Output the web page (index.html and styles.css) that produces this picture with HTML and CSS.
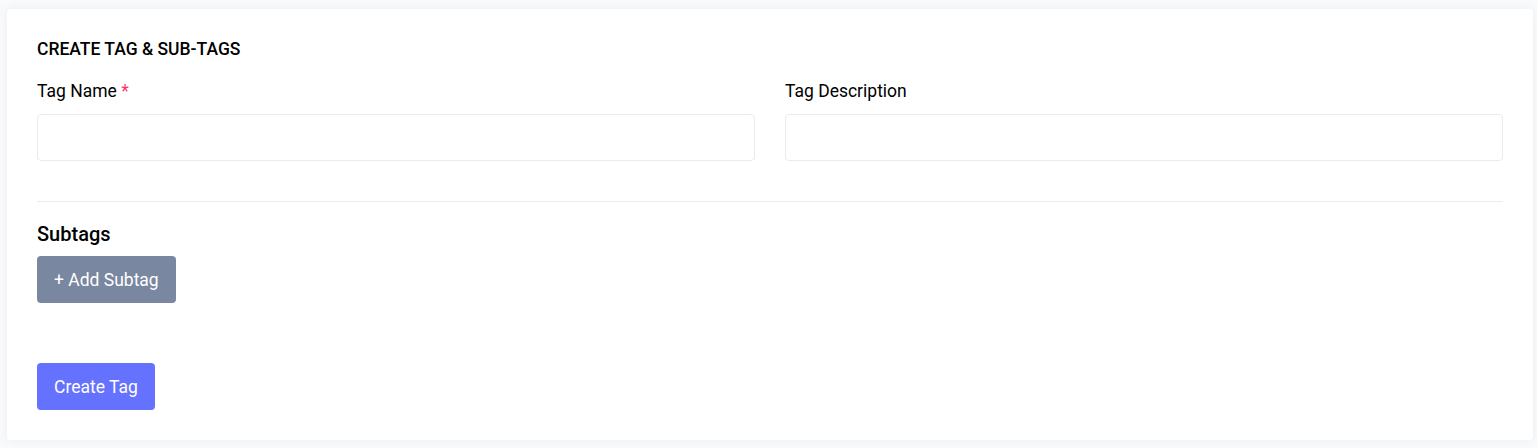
FILE: index.html
```html
<!DOCTYPE html>
<html>
<head>
<meta charset="utf-8">
<link rel="stylesheet" href="styles.css">
</head>
<body>
<div class="page">
  <div class="card">
    <h6 class="card-title">CREATE TAG &amp; SUB-TAGS</h6>
    <div class="row">
      <div class="field">
        <label class="label">Tag Name <span class="req">*</span></label>
        <input class="input" type="text">
      </div>
      <div class="field">
        <label class="label">Tag Description</label>
        <input class="input" type="text">
      </div>
    </div>
    <hr class="divider">
    <h5 class="section-title">Subtags</h5>
    <button class="btn btn-secondary">+ Add Subtag</button>
    <div class="actions">
      <button class="btn btn-primary">Create Tag</button>
    </div>
  </div>
</div>
</body>
</html>
```
FILE: styles.css
```css
* { box-sizing: border-box; }
html, body { margin: 0; padding: 0; }
body {
  background: #f9fafb;
  font-family: Roboto, "Liberation Sans", sans-serif;
  color: #000;
}
.page {
  padding: 9px 4px 8px 7px;
}
.card {
  background: #fff;
  border-radius: 4px;
  box-shadow: 0 0 10px 0 rgba(183, 192, 206, 0.2);
  padding: 30px;
}
.card-title {
  margin: 0 0 20px;
  font-size: 17.5px;
  line-height: 20px;
  font-weight: 500;
  text-transform: uppercase;
}
.row {
  display: grid;
  grid-template-columns: 1fr 1fr;
  gap: 30px;
}
.field { display: flex; flex-direction: column; }
.label {
  font-size: 17.5px;
  line-height: 24px;
  margin-bottom: 11px;
}
.req { color: #ff3366; }
.input {
  height: 47px;
  border: 1px solid #e9ecef;
  border-radius: 4px;
  font: inherit;
  padding: 0 12px;
  outline: none;
}
.divider {
  border: 0;
  border-top: 1px solid #e9ecef;
  margin: 40px 0 19px;
}
.section-title {
  margin: 0 0 9px;
  font-size: 20px;
  line-height: 26px;
  font-weight: 500;
}
.btn {
  height: 47px;
  border: 0;
  border-radius: 4px;
  color: #fff;
  font-family: inherit;
  font-size: 17.5px;
  padding: 0 17px;
  cursor: pointer;
}
.btn-secondary { background: #7987a1; }
.btn-primary { background: #6571ff; }
.actions { margin-top: 60px; }
```
